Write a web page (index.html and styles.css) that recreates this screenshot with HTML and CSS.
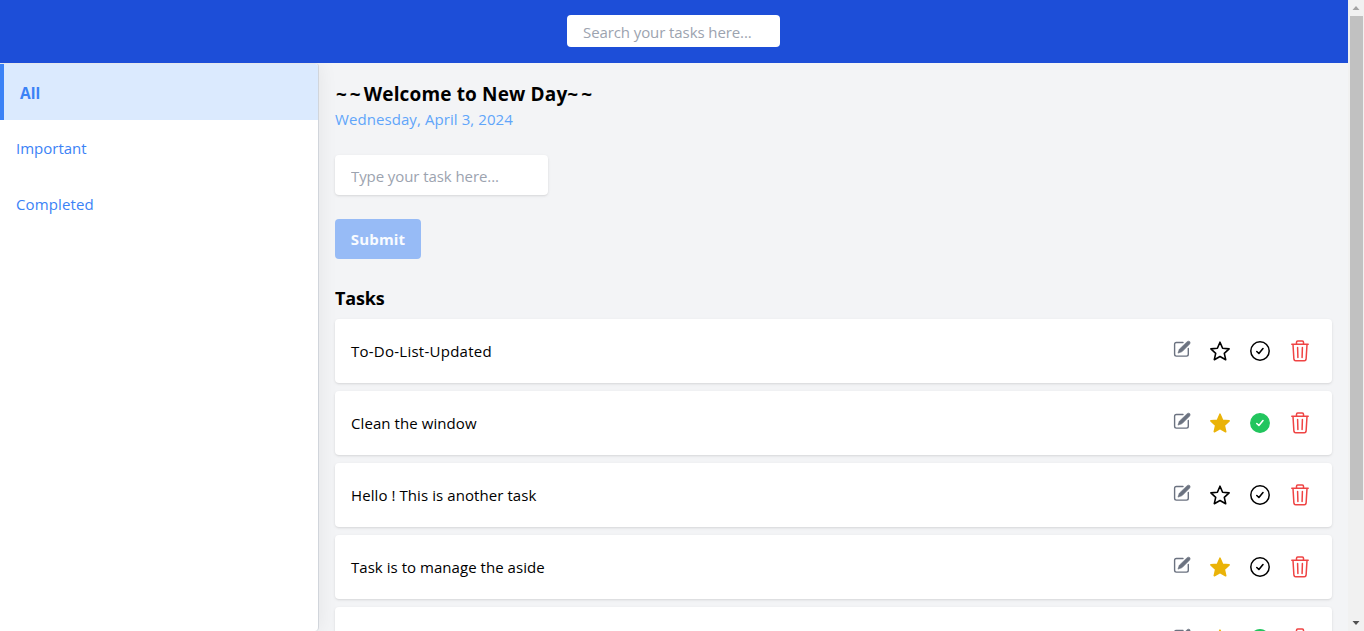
FILE: index.html
```html
<!DOCTYPE html>
<html lang="en">
<head>
<meta charset="utf-8">
<title>To-Do List</title>
<link rel="stylesheet" href="styles.css">
</head>
<body>
<svg class="sprite" aria-hidden="true">
  <symbol id="edit" viewBox="0 0 18 18">
    <path d="M10 2.5H3.4Q1.6 2.5 1.6 4.3V14.3Q1.6 16.1 3.4 16.1H13.5Q15.3 16.1 15.3 14.3V8.5" fill="none" stroke="currentColor" stroke-width="1.4" stroke-linecap="round"/>
    <path d="M14.2 1.7Q15.5 .8 16.6 1.5 17.5 2.6 16.7 3.9L9.1 11.6 5 13.1 6.4 9.2Z" fill="currentColor" stroke="currentColor" stroke-width=".7" stroke-linejoin="round"/>
  </symbol>
  <symbol id="star" viewBox="0 0 24 24">
    <path d="M12 3.2 14.6 9.3 21.1 9.9 16.3 14.3 17.7 20.7 12 17.5 6.3 20.7 7.7 14.3 2.9 9.9 9.4 9.3Z" stroke="currentColor" stroke-width="1.6" stroke-linejoin="round"/>
  </symbol>
  <symbol id="check" viewBox="0 0 24 24">
    <circle cx="12" cy="12" r="9.2" stroke="currentColor" stroke-width="1.5"/>
    <path class="tick" d="M8.8 12.5 10.9 14.5 15 9.6" fill="none" stroke-width="1.6" stroke-linecap="round" stroke-linejoin="round"/>
  </symbol>
  <symbol id="trash" viewBox="0 0 24 24">
    <path d="M5 5.5 5.9 20.2Q6.1 21.8 7.6 21.8H16.4Q17.9 21.8 18.1 20.2L19 5.5M3.8 5.3H20.2M8.5 5.2V3.2Q8.5 2 9.7 2H14.3Q15.5 2 15.5 3.2V5.2M9.6 8.5 9.9 18.4M14.4 8.5 14.1 18.4" fill="none" stroke="currentColor" stroke-width="1.5" stroke-linecap="round" stroke-linejoin="round"/>
  </symbol>
</svg>
<div class="app">
  <div class="page">
    <header class="topbar"><input class="search" type="text" placeholder="Search your tasks here..."></header>
    <div class="body">
      <nav class="sidebar">
        <a class="nav-item active">All</a>
        <a class="nav-item important">Important</a>
        <a class="nav-item completed">Completed</a>
      </nav>
      <main class="content">
        <h1 class="title"><span class="tilde">~~</span>Welcome to New Day<span class="tilde">~~</span></h1>
        <p class="date">Wednesday, April 3, 2024</p>
        <input class="new-task" type="text" placeholder="Type your task here...">
        <button class="submit" disabled>Submit</button>
        <h2 class="heading">Tasks</h2>
        <ul class="tasks">
          <li class="task"><span class="t1">To-Do-List-Updated</span><div class="actions"><svg class="edit"><use href="#edit"/></svg><svg class="icon"><use href="#star"/></svg><svg class="icon"><use href="#check"/></svg><svg class="icon trash"><use href="#trash"/></svg></div></li>
          <li class="task"><span class="t2">Clean the window</span><div class="actions"><svg class="edit"><use href="#edit"/></svg><svg class="icon starred"><use href="#star"/></svg><svg class="icon done"><use href="#check"/></svg><svg class="icon trash"><use href="#trash"/></svg></div></li>
          <li class="task"><span class="t3">Hello ! This is another task</span><div class="actions"><svg class="edit"><use href="#edit"/></svg><svg class="icon"><use href="#star"/></svg><svg class="icon"><use href="#check"/></svg><svg class="icon trash"><use href="#trash"/></svg></div></li>
          <li class="task"><span class="t4">Task is to manage the aside</span><div class="actions"><svg class="edit"><use href="#edit"/></svg><svg class="icon starred"><use href="#star"/></svg><svg class="icon"><use href="#check"/></svg><svg class="icon trash"><use href="#trash"/></svg></div></li>
          <li class="task"><div class="actions"><svg class="edit"><use href="#edit"/></svg><svg class="icon starred"><use href="#star"/></svg><svg class="icon done"><use href="#check"/></svg><svg class="icon trash"><use href="#trash"/></svg></div></li>
        </ul>
      </main>
    </div>
  </div>
  <div class="scrollbar">
    <svg class="arrow" viewBox="0 0 16 16"><path d="M4.5 10H11.5L8 6Z" fill="#a3a3a3"/></svg>
    <div class="thumb"></div>
    <svg class="arrow" viewBox="0 0 16 16"><path d="M4.5 6H11.5L8 10Z" fill="#505050"/></svg>
  </div>
</div>
</body>
</html>
```
FILE: styles.css
```css
* { box-sizing: border-box; margin: 0; padding: 0; }
body { height: 631px; overflow: hidden; font: 15px/24px "Open Sans", "Noto Sans", sans-serif; color: #000; }
.sprite { display: none; }
.app { display: flex; height: 631px; overflow: hidden; }
.page { flex: 1; display: flex; flex-direction: column; background: #f3f4f6; overflow: hidden; }
.topbar { height: 63px; flex: none; background: #1d4ed8; display: flex; justify-content: center; align-items: flex-start; padding-top: 15px; }
input { width: 213px; border: 0; border-radius: 4px; padding: 0 16px; background: #fff; font: inherit; }
input::placeholder { color: #9ca3af; opacity: 1; }
.search { height: 32px; padding-top: 1px; letter-spacing: -0.09px; margin-right: 1px; }
.body { flex: 1; min-height: 0; display: flex; overflow: hidden; }
.sidebar { width: 319px; height: 568px; flex: none; background: #fff; border: solid #d1d5db; border-width: 1px 1px 0 0; border-top-color: #e5e7eb; border-radius: 0 4px 4px 0; box-shadow: 0 0 20px rgba(0,0,0,.07); }
.nav-item { display: block; height: 56px; padding: 16px; color: #3b82f6; letter-spacing: 0; }
.completed { letter-spacing: 0.12px; }
.nav-item.active { background: #dbeafe; border-left: 4px solid #3b82f6; padding-top: 17px; font-size: 15.5px; font-weight: 700; border-top-right-radius: 3px; }
.content { flex: 1; padding: 17px 16px 0; display: flex; flex-direction: column; align-items: flex-start; }
.content > * { flex-shrink: 0; }
.title { font-size: 19px; line-height: 28px; letter-spacing: 0.15px; font-weight: 700; padding-left: 1px; }
.tilde { letter-spacing: 3px; }
.date { color: #60a5fa; line-height: 24px; letter-spacing: 0.08px; margin-top: -1px; }
.new-task { height: 40px; margin-top: 24px; padding-top: 2px; letter-spacing: -0.08px; box-shadow: 0 1px 3px rgba(0,0,0,.1), 0 1px 2px -1px rgba(0,0,0,.1); }
.submit { width: 86px; height: 40px; margin-top: 24px; border: 0; border-radius: 4px; background: #97bbf6; color: #f9fbff; font: 700 15px/40px "Open Sans", sans-serif; letter-spacing: 0.2px; }
.heading { margin-top: 25px; font-size: 18px; line-height: 28px; font-weight: 700; letter-spacing: -0.15px; }
.tasks { width: 997px; margin-top: 7px; display: flex; flex-direction: column; gap: 8px; list-style: none; }
.task { height: 64px; padding: 0 20px 0 16px; display: flex; align-items: center; justify-content: space-between; background: #fff; border-radius: 4px; box-shadow: 0 1px 3px rgba(0,0,0,.1), 0 1px 2px -1px rgba(0,0,0,.1); letter-spacing: 0.08px; }
.t1 { letter-spacing: 0.25px; }
.t4 { letter-spacing: 0.04px; }
.actions { display: flex; align-items: center; gap: 16px; margin-left: auto; }
.icon { width: 24px; height: 24px; fill: none; stroke: none; }
.tick { stroke: var(--tick, #000); }
.edit { width: 18px; height: 18px; color: #6b7280; margin: 0 1px 4px 0; }
.starred { color: #eab308; fill: #eab308; }
.done { color: #22c55e; fill: #22c55e; --tick: #fff; }
.trash { color: #ef4444; }
.scrollbar { width: 16px; flex: none; display: flex; flex-direction: column; justify-content: space-between; background: #f1f1f1; }
.arrow { width: 16px; height: 16px; flex: none; }
.thumb { width: 13px; height: 484px; margin: 0 0 auto 2px; background: #c1c1c1; }
```
